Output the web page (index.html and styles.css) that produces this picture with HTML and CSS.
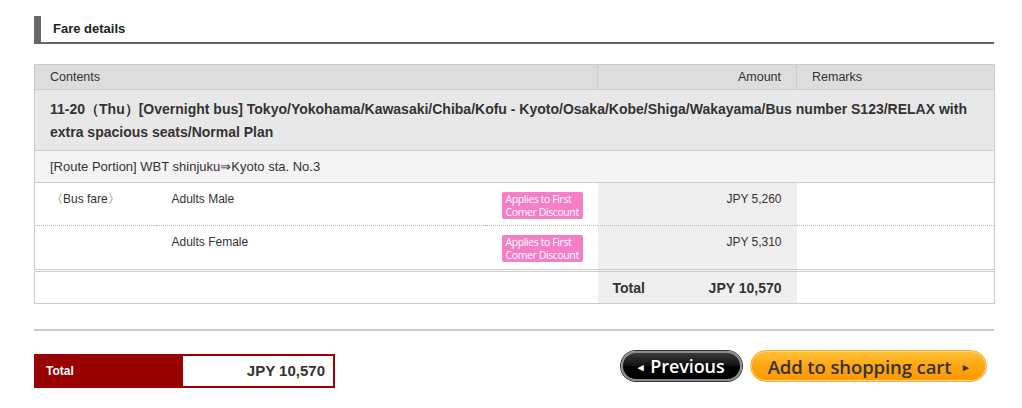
FILE: index.html
```html
<!DOCTYPE html>
<html>
<head>
<meta charset="utf-8">
<link rel="stylesheet" href="styles.css">
</head>
<body>
<div class="page">
  <h2 class="heading">Fare details</h2>
  <table class="fare">
    <colgroup>
      <col class="c1"><col class="c2"><col class="c3"><col class="c4"><col class="c5">
    </colgroup>
    <tr class="head">
      <th colspan="3" class="th-contents">Contents</th>
      <th class="th-amount">Amount</th>
      <th class="th-remarks">Remarks</th>
    </tr>
    <tr class="title">
      <td colspan="5">11-20（Thu）[Overnight bus] Tokyo/Yokohama/Kawasaki/Chiba/Kofu - Kyoto/Osaka/Kobe/Shiga/Wakayama/Bus number S123/RELAX with extra spacious seats/Normal Plan</td>
    </tr>
    <tr class="route">
      <td colspan="5">[Route Portion] WBT shinjuku⇒Kyoto sta. No.3</td>
    </tr>
    <tr class="fare-row first">
      <td class="kind">〈Bus fare〉</td>
      <td class="pax">Adults Male</td>
      <td class="badge-cell"><span class="badge"><span class="bl">Applies to First</span><span class="bl">Comer Discount</span></span></td>
      <td class="amount">JPY 5,260</td>
      <td class="remarks"></td>
    </tr>
    <tr class="fare-row last">
      <td class="kind"></td>
      <td class="pax">Adults Female</td>
      <td class="badge-cell"><span class="badge"><span class="bl">Applies to First</span><span class="bl">Comer Discount</span></span></td>
      <td class="amount">JPY 5,310</td>
      <td class="remarks"></td>
    </tr>
    <tr class="total-row">
      <td colspan="3"></td>
      <td class="amount total-cell"><span class="t-label">Total</span><span class="t-value">JPY 10,570</span></td>
      <td></td>
    </tr>
  </table>
  <div class="divider"></div>
  <div class="footer">
    <div class="grand">
      <div class="grand-label">Total</div>
      <div class="grand-value">JPY 10,570</div>
    </div>
    <div class="buttons">
      <a class="btn btn-prev"><span class="tri">◂</span>Previous</a>
      <a class="btn btn-cart">Add to shopping cart<span class="tri tri-r">▸</span></a>
    </div>
  </div>
</div>
</body>
</html>
```
FILE: styles.css
```css
html, body {
  margin: 0;
  padding: 0;
  background: #fff;
}
body {
  font-family: "Liberation Sans", Arial, sans-serif;
  color: #333;
  font-size: 12px;
}
.page {
  width: 960px;
  padding: 16px 0 0 34px;
}
.heading {
  margin: 0;
  height: 26px;
  line-height: 25px;
  font-size: 13px;
  font-weight: bold;
  color: #222;
  border-left: 7px solid #666;
  border-bottom: 2px solid #666;
  padding-left: 12px;
}
.fare {
  margin-top: 20px;
  width: 960px;
  border-collapse: collapse;
  border: 1px solid #cccccc;
  table-layout: fixed;
}
.c1 { width: 121px; }
.c2 { width: 330px; }
.c3 { width: 112px; }
.c4 { width: 199px; }
.c5 { width: 198px; }
.fare th {
  background: #dddddd;
  font-weight: normal;
  font-size: 12.5px;
  height: 24px;
  padding: 0 15px;
  border-bottom: 1px solid #cccccc;
  text-align: left;
}
.fare th.th-amount {
  text-align: right;
  border-left: 1px solid #cccccc;
  border-right: 1px solid #cccccc;
}
.title td {
  background: #e8e8e8;
  font-size: 14px;
  font-weight: bold;
  line-height: 23px;
  padding: 8px 15px 6px;
  border-bottom: 1px solid #cccccc;
  color: #333;
}
.route td {
  background: #f4f4f4;
  font-size: 13px;
  height: 31px;
  padding: 0 15px;
  border-bottom: 1px solid #cccccc;
}
.fare-row td {
  vertical-align: top;
  padding: 9px 15px 0;
  height: 33px;
  line-height: 14px;
}
.fare-row.first td.kind,
.fare-row.first td.remarks {
  border-top: 1px dotted #bbbbbb;
}
.fare-row.last td {
  border-top: 1px dotted #bbbbbb;
}
.fare-row .kind {
  padding-left: 16px;
}
.fare-row .pax {
  padding-left: 16px;
}
.badge-cell {
  text-align: right;
}
.badge {
  display: inline-block;
  background: #f57ec6;
  color: #fff;
  font-family: "Open Sans", sans-serif;
  font-size: 10.5px;
  letter-spacing: -0.4px;
  text-align: left;
  padding: 1px 3px 0 4px;
  border-radius: 2px;
  width: 74px;
  white-space: nowrap;
}
.badge .bl {
  display: block;
  line-height: 13px;
  height: 13px;
}
.fare-row td.amount {
  background: #efefef;
  text-align: right;
}
.fare-row.last td {
  height: 34px;
  border-bottom: 3px double #cccccc;
}
.total-row td {
  height: 31px;
  padding: 0 15px;
}
.total-cell {
  background: #efefef;
  font-weight: bold;
  font-size: 14px;
}
.total-cell .t-label { float: left; }
.total-cell .t-value { float: right; }
.divider {
  margin-top: 25px;
  height: 2px;
  background: #cccccc;
}
.footer {
  display: flex;
  justify-content: space-between;
  align-items: flex-start;
  margin-top: 19px;
}
.grand {
  display: flex;
  width: 301px;
  height: 34px;
  margin-top: 4px;
  background: #990000;
  box-sizing: border-box;
}
.grand-label {
  width: 137px;
  padding-left: 12px;
  color: #fff;
  font-weight: bold;
  font-size: 12px;
  line-height: 34px;
}
.grand-value {
  flex: 1;
  background: #fff;
  margin: 2px 2px 2px 0;
  text-align: right;
  padding-right: 8px;
  font-weight: bold;
  font-size: 15px;
  line-height: 30px;
  color: #333;
}
.buttons {
  display: flex;
  align-items: flex-start;
  gap: 8px;
  margin-right: 7px;
}
.btn {
  display: flex;
  align-items: center;
  justify-content: center;
  font-family: "Open Sans", sans-serif;
  font-weight: 600;
  font-size: 18px;
  box-sizing: border-box;
  border-radius: 16px;
  text-decoration: none;
  letter-spacing: -0.1px;
}
.btn-prev {
  width: 121px;
  height: 30px;
  margin-top: 1px;
  color: #fff;
  background: linear-gradient(#3a3a3a 0%, #111 48%, #000 52%, #000 100%);
  border: 2px solid #8c8c8c;
  box-shadow: 0 0 0 1px #333;
}
.btn-cart {
  width: 237px;
  height: 32px;
  color: #333;
  font-size: 18.5px;
  background: linear-gradient(#ffc23a 0%, #ffa510 50%, #ff9900 100%);
  border: 1px solid #f2b24a;
  box-shadow: inset 0 0 0 1px #ffd480;
}
.tri {
  font-size: 11px;
  margin-right: 6px;
}
.tri-r {
  margin-right: 0;
  margin-left: 12px;
}
```
